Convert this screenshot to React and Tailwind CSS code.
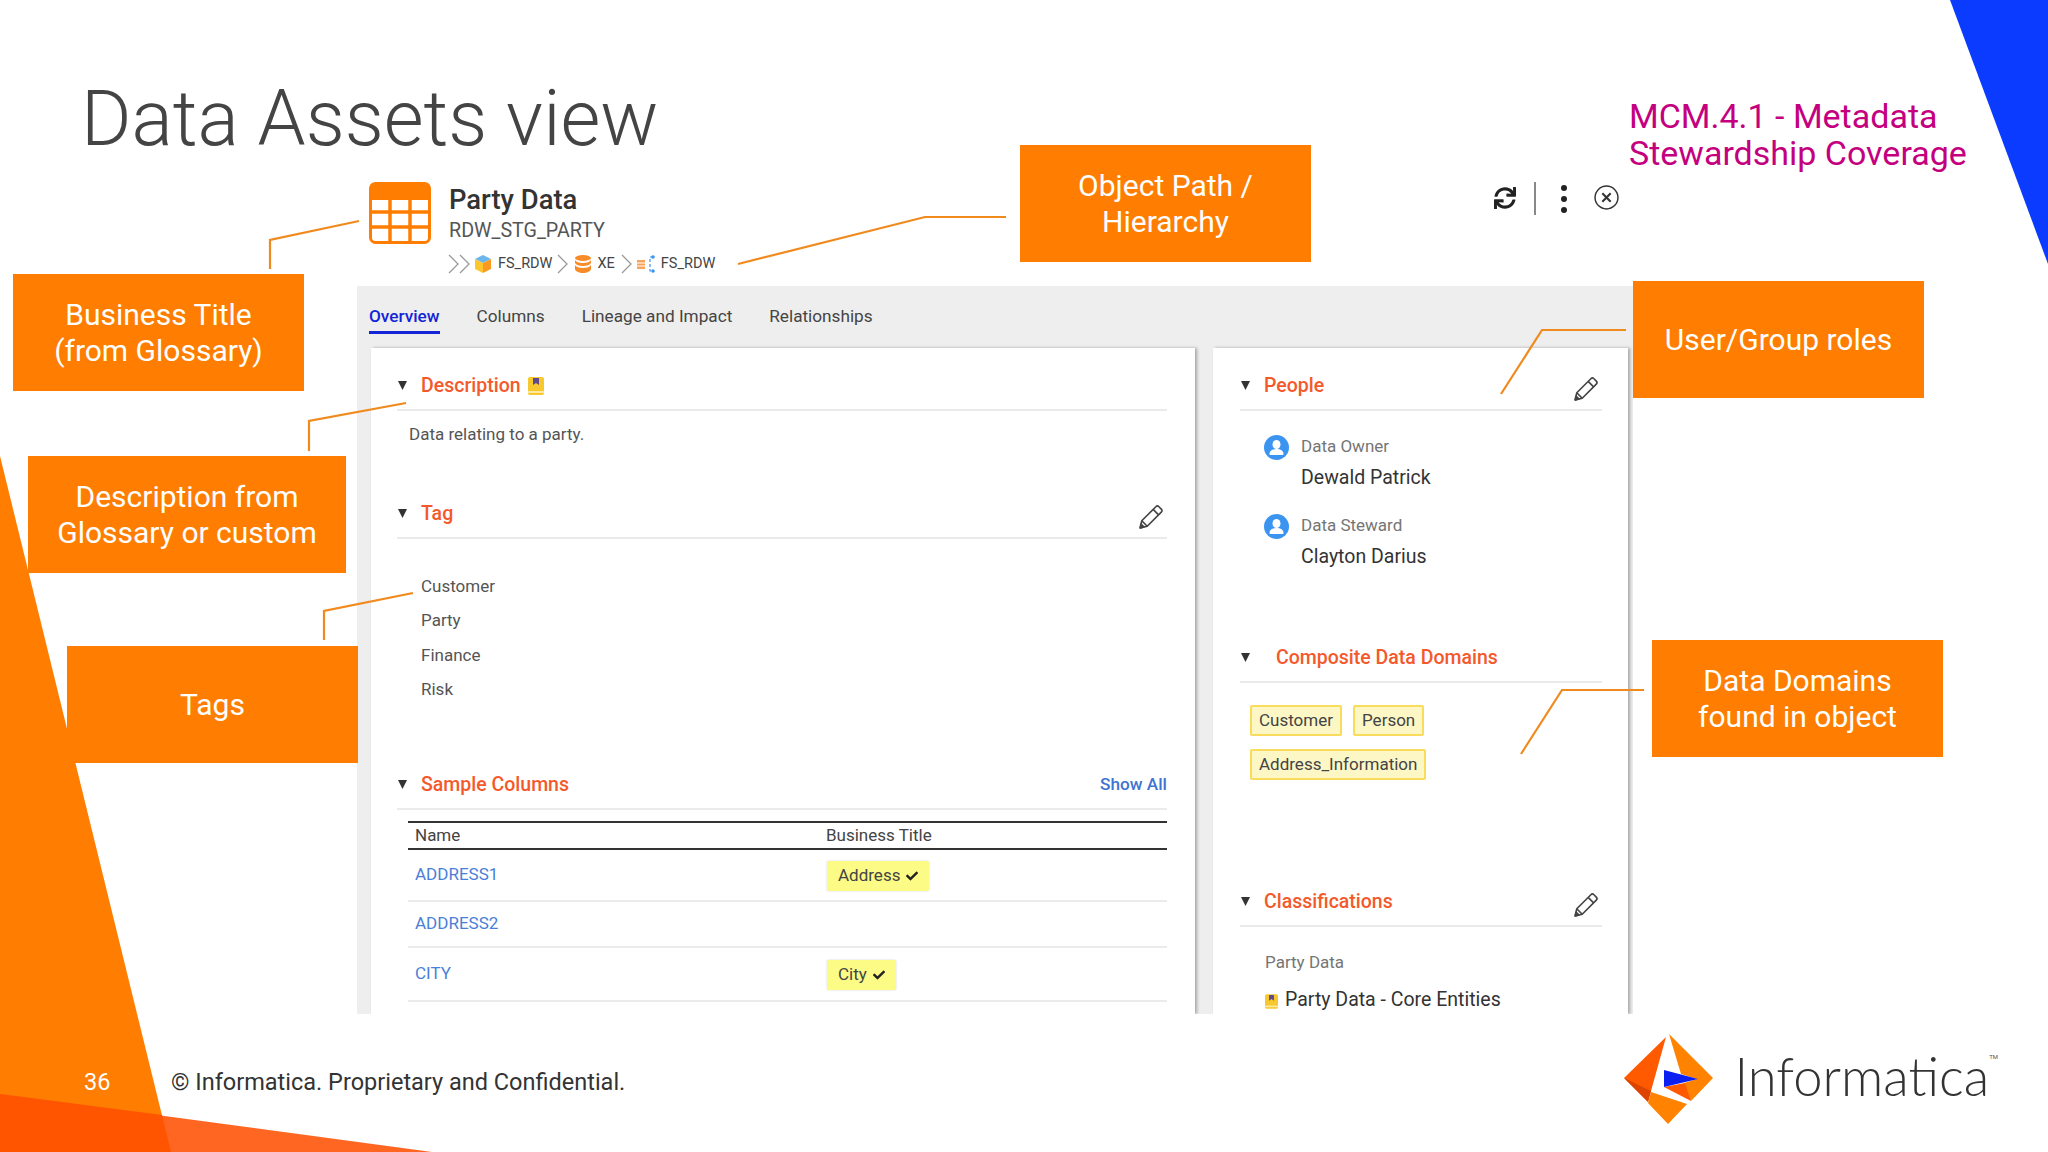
import { FaSync, FaCheck } from "react-icons/fa";

const Book = ({ className }) => (
  <svg viewBox="0 0 16 18" className={className}>
    <rect x="0" y="0" width="16" height="18" rx="2" fill="#f7c92f" />
    <rect x="0" y="14" width="16" height="2" fill="#fbe9a0" />
    <path d="M5 1h6v7l-3-2-3 2z" fill="#5e4a8c" />
  </svg>
);

const Tri = () => (
  <svg viewBox="0 0 10 10" className="w-[9px] h-[9px] shrink-0">
    <path d="M0 0h10L5 10z" fill="#333" />
  </svg>
);

const Avatar = () => (
  <svg viewBox="0 0 25 25" className="w-[25px] h-[25px] mt-[1px] shrink-0">
    <circle cx="12.5" cy="12.5" r="12.5" fill="#3b94f0" />
    <ellipse cx="12.5" cy="9.5" rx="4" ry="4.6" fill="#fff" />
    <path d="M5.5 19c0-3.5 3-5 7-5s7 1.500 7 5c0 .6-.5 1-1 1h-12c-.5 0-1-.4-1-1z" fill="#fff" />
  </svg>
);

const Chevron = ({ className }) => (
  <svg viewBox="0 0 11 20" className={className} fill="none" stroke="#9a9a9a" strokeWidth="1.3">
    <path d="M1 1l9 9-9 9" />
  </svg>
);

const Heading = ({ title, gap = "gap-[14px]", right }) => (
  <div className={`flex items-center h-[39px] pl-[1px] pb-[10px] border-b-2 border-[#ebebeb] ${gap}`}>
    <Tri />
    <span className="text-[19.500px] leading-[28px] font-medium text-[#f4592b]">{title}</span>
    {right}
  </div>
);

const Edit = () => (
  <svg viewBox="0 0 24 24" className="ml-auto mt-[7px] mr-[3px] w-[26px] h-[26px]" fill="none" stroke="#444" strokeWidth="1.500" strokeLinejoin="round">
    <path d="M2 22l1.500-6.500L16.500 2.500a2 2 0 0 1 2.800 0l2.200 2.200a2 2 0 0 1 0 2.800L8.500 20.500z" />
    <path d="M14 5l5 5M3.500 15.500l5 5" />
    <path d="M2 22l.8-3.500 2.700 2.700z" fill="#444" />
  </svg>
);

const Callout = ({ className, children }) => (
  <div className={`absolute h-[117px] flex items-center justify-center text-center bg-[#ff7d00] text-white text-[30px] leading-[36px] ${className}`}>
    <div>{children}</div>
  </div>
);

const Person = ({ role, name, className }) => (
  <div className={`flex gap-[12px] ${className}`}>
    <Avatar />
    <div>
      <div className="text-[17px] leading-[24px] text-[#757575]">{role}</div>
      <div className="mt-[8px] text-[19.500px] leading-[24px] text-[#333]">{name}</div>
    </div>
  </div>
);

const Chip = ({ children }) => (
  <span className="h-[31px] px-[7px] flex items-center rounded-[2px] border-2 border-[#f9dc5c] bg-[#fdf6c5] text-[17px] text-[#444]">
    {children}
  </span>
);

const Check = ({ children }) => (
  <span className="h-[30px] px-[11px] flex items-center gap-[6px] rounded-[2px] bg-[#fbfb85] shadow-[0_0_2px_rgba(0,0,0,0.2)] text-[17px] text-[#444]">
    {children}
    <FaCheck size={12} className="text-[#222]" />
  </span>
);

export default function App() {
  return (
    <div className="relative w-[2048px] h-[1152px] overflow-hidden bg-white font-['Roboto',sans-serif] text-[#444]">
      {/* slide background */}
      <svg viewBox="0 0 2048 1152" className="absolute inset-0 w-[2048px] h-[1152px]">
        <polygon points="1950,0 2048,0 2048,264" fill="#0a3bff" />
        <polygon points="0,456 171,1152 0,1152" fill="#ff7d00" />
        <polygon points="0,1094 432,1152 0,1152" fill="#ff6622" />
        <polygon points="0,1094 162,1115 171,1152 0,1152" fill="#ff5500" />
      </svg>

      <div className="relative flex h-[182px] pl-[81px]">
        <h1 className="pt-[69px] text-[77px] leading-[100px] font-light text-[#444] whitespace-nowrap">Data Assets view</h1>
        <div className="ml-auto mr-[60px] w-[359px] pt-[98px] text-[34px] leading-[37px] text-[#c4007f] whitespace-nowrap">
          MCM.4.1 - Metadata<br />Stewardship Coverage
        </div>
      </div>

      <div className="relative flex h-[104px] ml-[369px] w-[1256px]">
        <svg viewBox="0 0 62 62" className="w-[62px] h-[62px] shrink-0">
          <rect x="1.500" y="1.500" width="59" height="59" rx="5" fill="#fff" stroke="#ff7d00" strokeWidth="3" />
          <path d="M1 5a4 4 0 0 1 4-4h52a4 4 0 0 1 4 4v13H1z" fill="#ff7d00" />
          <path d="M21 16v44M41 16v44M2 30h58M2 45h58" stroke="#ff7d00" strokeWidth="3.500" />
        </svg>
        <div className="ml-[18px]">
          <div className="pt-[1px] text-[27.400px] leading-[34px] font-medium text-[#333]">Party Data</div>
          <div className="text-[19.700px] leading-[28px] text-[#555]">RDW_STG_PARTY</div>
          <div className="flex items-center h-[24px] mt-[7px] -ml-[1px] text-[14.500px] text-[#444]">
            <Chevron className="w-[11px] h-[20px]" />
            <Chevron className="w-[11px] h-[20px]" />
            <svg viewBox="0 0 18 18" className="w-[18px] h-[18px] ml-[4px]">
              <path d="M9 0l8 4-8 4-8-4z" fill="#6cb6ee" />
              <path d="M1 4l8 4v10l-8-4z" fill="#fdc62e" />
              <path d="M17 4l-8 4v10l8-4z" fill="#f99a1e" />
            </svg>
            <span className="ml-[6px]">FS_RDW</span>
            <Chevron className="w-[11px] h-[20px] ml-[5px]" />
            <svg viewBox="0 0 16 18" className="w-[16px] h-[18px] ml-[7px]">
              <ellipse cx="8" cy="3" rx="8" ry="3" fill="#f98c2a" />
              <path d="M0 5c1 2 4 3 8 3s7-1 8-3v3c-1 2-4 3-8 3s-7-1-8-3z" fill="#f98c2a" />
              <path d="M0 10c1 2 4 3 8 3s7-1 8-3v4c0 2-4 4-8 4s-8-2-8-4z" fill="#f98c2a" />
            </svg>
            <span className="ml-[6px]">XE</span>
            <Chevron className="w-[11px] h-[20px] ml-[6px]" />
            <svg viewBox="0 0 18 18" className="w-[18px] h-[18px] ml-[5px]">
              <path d="M0 5h8v9H0z" fill="#f9a35a" />
              <path d="M0 8h8M0 11h8" stroke="#fff" strokeWidth="1" />
              <path d="M16 2h-3v14h3" fill="none" stroke="#3b94f0" strokeWidth="1.200" strokeDasharray="3 2" />
              <circle cx="16" cy="2" r="1.800" fill="#3b94f0" />
              <circle cx="16" cy="16" r="1.800" fill="#3b94f0" />
            </svg>
            <span className="ml-[6px]">FS_RDW</span>
          </div>
        </div>
        <div className="ml-auto flex items-start h-[33px] mr-[6px]">
          <FaSync size={22} className="mt-[5px] text-[#222]" />
          <div className="ml-[18px] w-[2px] h-[33px] bg-[#888]" />
          <div className="ml-[25px] mt-[3px] flex flex-col gap-[5px]">
            <div className="w-[6px] h-[6px] rounded-full bg-[#222]" />
            <div className="w-[6px] h-[6px] rounded-full bg-[#222]" />
            <div className="w-[6px] h-[6px] rounded-full bg-[#222]" />
          </div>
          <svg viewBox="0 0 24 24" className="ml-[27px] mt-[3px] w-[25px] h-[25px]" fill="none" stroke="#333" strokeWidth="1.400">
            <circle cx="12" cy="12" r="11" />
            <path d="M8 8l8 8M16 8l-8 8" strokeWidth="2" />
          </svg>
        </div>
      </div>

      {/* captured product panel */}
      <div className="relative ml-[357px] w-[1276px] h-[728px] overflow-hidden bg-[#eeeeee]">
        <div className="flex h-[62px] pl-[12px] gap-[37px] text-[17.200px] text-[#444]">
          <div className="h-[48px] pt-[18px] leading-[24px] font-medium text-[#1424d6] border-b-[3px] border-[#1424d6]">Overview</div>
          <div className="pt-[18px] leading-[24px]">Columns</div>
          <div className="pt-[18px] leading-[24px]">Lineage and Impact</div>
          <div className="pt-[18px] leading-[24px]">Relationships</div>
        </div>
        <div className="flex pl-[14px] gap-[18px] h-[666px]">
          <div className="w-[824px] pl-[26px] pr-[28px] pt-[24px] bg-white shadow-[2px_0_3px_rgba(0,0,0,0.3)]">
            <Heading
              title={
                <span className="flex items-center gap-[7px]">
                  Description
                  <Book className="w-[16px] h-[18px]" />
                </span>
              }
            />
            <div className="mt-[11px] pl-[12px] text-[17px] leading-[24px] text-[#555]">Data relating to a party.</div>
            <div className="mt-[54px]">
              <Heading title="Tag" right={<Edit />} />
            </div>
            <div className="pt-[30px] pl-[24px] text-[17px] leading-[34.300px] text-[#555]">
              <div>Customer</div>
              <div>Party</div>
              <div>Finance</div>
              <div>Risk</div>
            </div>
            <div className="mt-[65px]">
              <Heading
                title="Sample Columns"
                right={<span className="ml-auto text-[17.200px] font-medium text-[#3f74d0]">Show All</span>}
              />
            </div>
            <div className="ml-[11px] mt-[11px] border-t-2 border-[#333] text-[17px]">
              <div className="grid grid-cols-[418px_1fr] h-[27px] items-center border-b-2 border-[#333] text-[#444]">
                <div className="pl-[7px]">Name</div>
                <div>Business Title</div>
              </div>
              <div className="grid grid-cols-[418px_1fr] h-[52px] items-center border-b-2 border-[#ebebeb]">
                <div className="pl-[7px] text-[#4a7fd8]">ADDRESS1</div>
                <div className="flex pl-[1px] pt-[2px]"><Check>Address</Check></div>
              </div>
              <div className="grid grid-cols-[418px_1fr] h-[46px] items-center border-b-2 border-[#ebebeb]">
                <div className="pl-[7px] text-[#4a7fd8]">ADDRESS2</div>
              </div>
              <div className="grid grid-cols-[418px_1fr] h-[54px] items-center border-b-2 border-[#ebebeb]">
                <div className="pl-[7px] pb-[1px] text-[#4a7fd8]">CITY</div>
                <div className="flex pl-[1px] pt-[2px]"><Check>City</Check></div>
              </div>
            </div>
          </div>

          <div className="w-[415px] pl-[27px] pr-[26px] pt-[24px] bg-white shadow-[2px_0_3px_rgba(0,0,0,0.3)]">
            <Heading title="People" right={<Edit />} />
            <div className="pl-[24px]">
              <Person role="Data Owner" name="Dewald Patrick" className="mt-[23px]" />
              <Person role="Data Steward" name="Clayton Darius" className="mt-[23px]" />
            </div>
            <div className="mt-[75px]">
              <Heading title="Composite Data Domains" gap="gap-[26px]" />
            </div>
            <div className="mt-[22px] pl-[10px] flex flex-wrap gap-x-[11px] gap-y-[13px] w-[250px]">
              <Chip>Customer</Chip>
              <Chip>Person</Chip>
              <Chip>Address_Information</Chip>
            </div>
            <div className="mt-[108px]">
              <Heading title="Classifications" right={<Edit />} />
            </div>
            <div className="pl-[25px]">
              <div className="mt-[23px] text-[17px] leading-[24px] text-[#757575]">Party Data</div>
              <div className="mt-[14px] flex items-center gap-[7px] text-[19.500px] leading-[24px] text-[#333]">
                <Book className="w-[13px] h-[15px] mt-[3px]" />
                Party Data - Core Entities
              </div>
            </div>
          </div>
        </div>
      </div>

      {/* footer */}
      <div className="relative flex items-center h-[70px] mt-[34px] text-[23.500px]">
        <span className="ml-[84px] w-[87px] text-white">36</span>
        <span className="text-[#333]">© Informatica. Proprietary and Confidential.</span>
        <div className="ml-auto mr-[50px] -mt-[8px] flex items-center">
          <svg viewBox="0 0 90 90" className="w-[90px] h-[90px] mr-[21px]">
            <polygon points="42,3 0,44 24,68 27,57" fill="#ff5a00" />
            <polygon points="0,44 27,57 24,68" fill="#dc4400" />
            <polygon points="45,0 89,44 67,67 60,49 73,45 57,40" fill="#ff8200" />
            <polygon points="27,58 63,70 44,90 24,69" fill="#ff8200" />
            <polygon points="40,53 61,49 67,67" fill="#ff5a00" />
            <polygon points="40,36 74,45 40,53" fill="#0a1ff0" />
          </svg>
          <span className="-mt-[7px] text-[52.500px] leading-[60px] font-light font-['Lato',sans-serif] text-[#333]">Informatica</span>
          <span className="self-start text-[6px] mt-[18px] text-[#555]">TM</span>
        </div>
      </div>

      {/* callouts */}
      <Callout className="left-[13px] top-[274px] w-[291px]">Business Title<br />(from Glossary)</Callout>
      <Callout className="left-[28px] top-[456px] w-[318px]">Description from<br />Glossary or custom</Callout>
      <Callout className="left-[67px] top-[646px] w-[291px]">Tags</Callout>
      <Callout className="left-[1020px] top-[145px] w-[291px]">Object Path /<br />Hierarchy</Callout>
      <Callout className="left-[1633px] top-[281px] w-[291px]">User/Group roles</Callout>
      <Callout className="left-[1652px] top-[640px] w-[291px]">Data Domains<br />found in object</Callout>

      <svg viewBox="0 0 2048 1152" className="absolute inset-0 w-[2048px] h-[1152px] pointer-events-none" fill="none" stroke="#f08a1d" strokeWidth="2.200">
        <path d="M359 221L270 240V269" />
        <path d="M406 403L309 421V451" />
        <path d="M413 593L324 611V640" />
        <path d="M738 264L925 217H1006" />
        <path d="M1626 330H1542L1501 394" />
        <path d="M1644 690H1562L1521 754" />
      </svg>
    </div>
  );
}
